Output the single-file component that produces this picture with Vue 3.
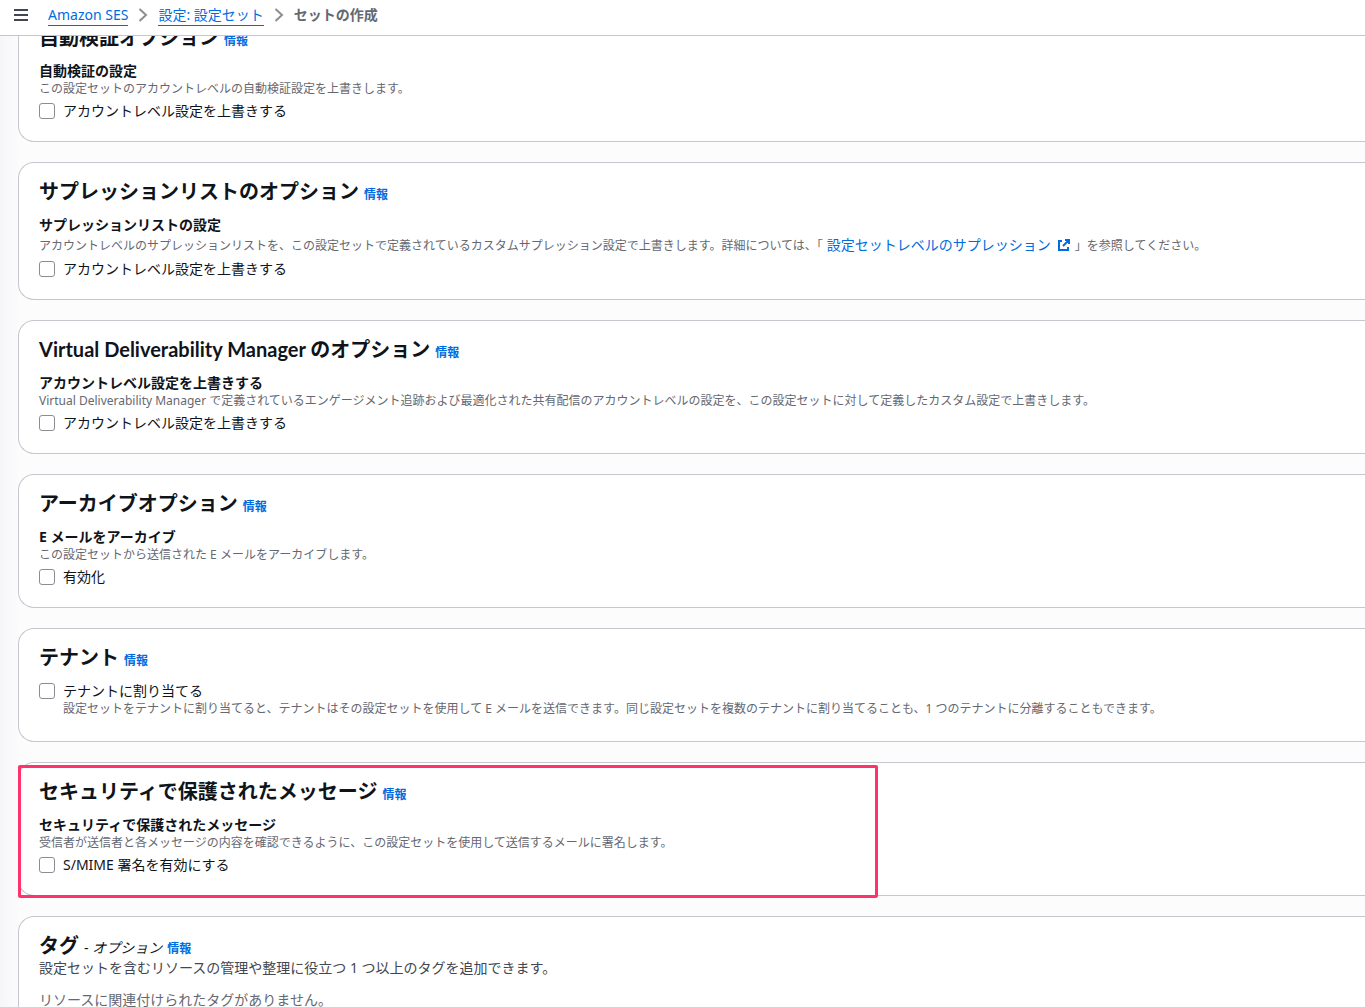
<script setup>
import { reactive } from 'vue'

const override = 'アカウントレベル設定を上書きする'

const sections = reactive([
  {
    id: 'validation',
    title: '自動検証オプション',
    label: '自動検証の設定',
    description: 'この設定セットのアカウントレベルの自動検証設定を上書きします。',
    option: override,
    checked: false
  },
  {
    id: 'suppression',
    title: 'サプレッションリストのオプション',
    label: 'サプレッションリストの設定',
    description: 'アカウントレベルのサプレッションリストを、この設定セットで定義されているカスタムサプレッション設定で上書きします。詳細については、「',
    link: '設定セットレベルのサプレッション',
    after: '」を参照してください。',
    option: override,
    checked: false
  },
  {
    id: 'vdm',
    title: 'Virtual Deliverability Manager のオプション',
    label: override,
    description: 'Virtual Deliverability Manager で定義されているエンゲージメント追跡および最適化された共有配信のアカウントレベルの設定を、この設定セットに対して定義したカスタム設定で上書きします。',
    option: override,
    checked: false
  },
  {
    id: 'archive',
    title: 'アーカイブオプション',
    label: 'E メールをアーカイブ',
    description: 'この設定セットから送信された E メールをアーカイブします。',
    option: '有効化',
    checked: false
  },
  {
    id: 'tenant',
    title: 'テナント',
    option: 'テナントに割り当てる',
    hint: '設定セットをテナントに割り当てると、テナントはその設定セットを使用して E メールを送信できます。同じ設定セットを複数のテナントに割り当てることも、1 つのテナントに分離することもできます。',
    checked: false
  },
  {
    id: 'secure',
    title: 'セキュリティで保護されたメッセージ',
    label: 'セキュリティで保護されたメッセージ',
    description: '受信者が送信者と各メッセージの内容を確認できるように、この設定セットを使用して送信するメールに署名します。',
    option: 'S/MIME 署名を有効にする',
    checked: false,
    marked: true
  }
])
</script>

<template>
  <div class="page">
    <header class="topbar">
      <button class="menu" type="button" aria-label="メニュー">
        <svg width="14" height="14" viewBox="0 0 14 14" fill="none" stroke="#424650" stroke-width="2">
          <path d="M0 2h14M0 7h14M0 12h14" />
        </svg>
      </button>
      <nav class="crumbs">
        <a href="#ses">Amazon SES</a>
        <svg class="chevron" width="16" height="16" viewBox="0 0 16 16" fill="none" stroke="#8c8c94" stroke-width="2">
          <path d="M4.500 2 11 8l-6.500 6" />
        </svg>
        <a href="#sets">設定: 設定セット</a>
        <svg class="chevron" width="16" height="16" viewBox="0 0 16 16" fill="none" stroke="#8c8c94" stroke-width="2">
          <path d="M4.500 2 11 8l-6.500 6" />
        </svg>
        <span class="current">セットの作成</span>
      </nav>
    </header>

    <main class="content">
      <section v-for="s in sections" :key="s.id" class="card">
        <div class="heading">
          <h2>{{ s.title }}</h2>
          <a class="info" href="#info">情報</a>
        </div>
        <div v-if="s.label" class="field">
          <div class="label">{{ s.label }}</div>
          <p class="description">{{ s.description }}<template v-if="s.link"><a class="external" href="#suppression">{{ s.link }}<svg width="14" height="14" viewBox="0 0 14 14" fill="none" stroke="currentColor" stroke-width="2"><path d="M8 2h4v4M12 2 6 8M5 3H2v9h9V9" /></svg></a>{{ s.after }}</template></p>
        </div>
        <label class="option">
          <input v-model="s.checked" type="checkbox" />
          <span>{{ s.option }}</span>
        </label>
        <p v-if="s.hint" class="hint">{{ s.hint }}</p>
        <div v-if="s.marked" class="marker"></div>
      </section>

      <section class="card tags">
        <div class="heading">
          <h2>タグ</h2>
          <span class="optional">- <em>オプション</em></span>
          <a class="info" href="#info">情報</a>
        </div>
        <p class="summary">設定セットを含むリソースの管理や整理に役立つ 1 つ以上のタグを追加できます。</p>
        <p class="empty">リソースに関連付けられたタグがありません。</p>
      </section>
    </main>
  </div>
</template>

<style>
html {
  height: 100%;
  overflow: hidden;
}
body {
  height: 100%;
  overflow: hidden;
  background: #fcfcfd;
}
#app {
  height: 100%;
}
</style>

<style scoped>
.page {
  height: 100%;
  overflow: hidden;
  font-family: "Noto Sans", "Noto Sans CJK JP", sans-serif;
  font-size: 14px;
  line-height: 20px;
  color: #0f141a;
  background: linear-gradient(90deg, #f6f6f9, #fcfcfd 20px);
}
h2,
p {
  margin: 0;
}
a {
  color: #006ce0;
  text-decoration: none;
}
.topbar {
  position: relative;
  z-index: 2;
  display: flex;
  align-items: center;
  gap: 20px;
  height: 35px;
  padding: 0 14px;
  border-bottom: 1px solid #c6c6cd;
  background: #fff;
}
.menu {
  display: flex;
  padding: 0 0 5px;
  border: 0;
  background: none;
}
.crumbs {
  display: flex;
  align-items: center;
  gap: 7px;
  padding-bottom: 5px;
}
.crumbs a {
  border-bottom: 1px solid #006ce0;
}
.current {
  font-weight: 700;
  color: #656871;
}
.content {
  display: flex;
  flex-direction: column;
  gap: 20px;
  margin-top: -28px;
  padding-left: 18px;
}
.card {
  position: relative;
  padding: 16px 20px 20px;
  border: 1px solid #c6c6cd;
  border-right: 0;
  border-radius: 16px 0 0 16px;
  background: #fff;
}
.heading {
  display: flex;
  align-items: baseline;
  gap: 5px;
  height: 24px;
  margin-bottom: 12px;
}
h2 {
  font-family: Lato, "Noto Sans CJK JP", sans-serif;
  font-size: 20px;
  line-height: 24px;
  font-weight: 700;
}
.info {
  font-size: 12px;
  line-height: 16px;
  font-weight: 700;
}
.label {
  font-weight: 700;
}
.field {
  margin-bottom: 4px;
}
.description,
.hint {
  font-size: 12px;
  line-height: 16px;
  color: #656871;
}
.external {
  margin-left: 4px;
  font-size: 14px;
  line-height: 20px;
}
.external svg {
  margin: 0 4px 0 6px;
  vertical-align: -2px;
}
.option {
  display: flex;
  align-items: center;
  gap: 8px;
}
.option input {
  appearance: none;
  width: 16px;
  height: 16px;
  margin: 0;
  border: 1px solid #8c8c94;
  border-radius: 3px;
  background: #fff;
}
.option input:checked {
  background: #006ce0;
}
.hint {
  margin: 0 0 4px 24px;
}
.marker {
  position: absolute;
  top: 2px;
  left: -1px;
  width: 854px;
  height: 127px;
  border: 3px solid #ff3369;
  border-radius: 2px;
  pointer-events: none;
}
.tags .heading {
  margin-bottom: 1px;
}
.summary {
  color: #424650;
}
.empty {
  margin-top: 12px;
  color: #656871;
}
</style>
